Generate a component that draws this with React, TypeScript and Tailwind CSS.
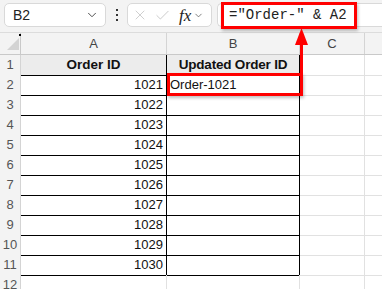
import { ChevronDown, X, Check } from 'lucide-react';

const cols = 'grid grid-cols-[21px_146px_133px_65px_1fr]';
const ids = [1021, 1022, 1023, 1024, 1025, 1026, 1027, 1028, 1029, 1030];

export default function App() {
  return (
    <div className="relative w-[382px] h-[289px] overflow-hidden bg-white font-['Liberation_Sans',Arial,sans-serif] text-[#111]">
      {/* formula bar */}
      <div className="flex items-start h-[33px] pt-[3px] bg-[#f3f3f3] border-b border-[#dcdcdc]">
        <div className="ml-[4px] w-[102px] h-[24px] flex items-center justify-between pl-[8px] pr-[6px] bg-white border border-[#d9d9d9] rounded-[5px]">
          <span className="text-[14px] text-[#222]">B2</span>
          <ChevronDown size={14} strokeWidth={1.6} className="text-[#444]" />
        </div>
        <div className="w-[21px] h-[24px] flex flex-col items-center justify-center gap-[3px]">
          <span className="w-[2px] h-[2px] bg-[#333]" />
          <span className="w-[2px] h-[2px] bg-[#333]" />
          <span className="w-[2px] h-[2px] bg-[#333]" />
        </div>
        <div className="w-[85px] h-[24px] flex items-center pl-[4px] bg-white border border-[#d9d9d9] rounded-[5px]">
          <X size={16} strokeWidth={1.1} className="text-[#bdbdbd]" />
          <Check size={17} strokeWidth={1.1} className="ml-[6px] text-[#bdbdbd]" />
          <span className="ml-[8px] font-['Liberation_Serif',serif] italic text-[17px] text-[#222] leading-none">fx</span>
          <ChevronDown size={11} strokeWidth={1.6} className="ml-[2px] text-[#555]" />
        </div>
        <div className="ml-[5px] flex-1 h-[24px] flex items-center pl-[11px] bg-white border border-r-0 border-[#d9d9d9] rounded-l-[5px]">
          <span className="font-['Liberation_Mono',monospace] text-[14px] text-[#222] whitespace-pre">="Order-" &amp; A2</span>
        </div>
      </div>

      {/* column headers */}
      <div className={`${cols} h-[22px] bg-[#f3f3f3] border-b border-[#c9c9c9] text-[13px] text-[#444]`}>
        <div className="relative border-r border-[#c9c9c9]">
          <svg className="absolute left-[7px] top-[5px]" width="12" height="12" viewBox="0 0 12 12">
            <polygon points="12,0 12,12 0,12" fill="#d3d3d3" />
          </svg>
          <span className="absolute right-[-1px] top-[1px] w-[2px] h-[2px] bg-black" />
        </div>
        <div className="flex items-center justify-center border-r border-[#d4d4d4]">A</div>
        <div className="flex items-center justify-center border-r border-[#d4d4d4]">B</div>
        <div className="flex items-center justify-center border-r border-[#d4d4d4]">C</div>
        <div />
      </div>

      {/* row 1 */}
      <div className={`${cols} h-[20px] text-[13.5px]`}>
        <div className="flex items-center justify-center bg-[#f3f3f3] border-r border-b border-[#d4d4d4] text-[13px] text-[#555]">1</div>
        <div className="flex items-center justify-center bg-[#ececec] border-r border-b border-black font-bold">Order ID</div>
        <div className="flex items-center justify-center bg-[#ececec] border-r border-b border-black font-bold tracking-[-0.2px]">Updated Order ID</div>
        <div className="border-r border-b border-[#e1e1e1]" />
        <div className="border-b border-[#e1e1e1]" />
      </div>

      {ids.map((id, i) => (
        <div key={id} className={`${cols} h-[20px] text-[13px]`}>
          <div className="flex items-center justify-center bg-[#f3f3f3] border-r border-b border-[#d4d4d4] text-[13px] text-[#555]">{i + 2}</div>
          <div className="flex items-center justify-end pr-[3px] border-r border-b border-black">{id}</div>
          <div className="flex items-center pl-[3px] border-r border-b border-black">{i === 0 ? 'Order-1021' : ''}</div>
          <div className="border-r border-b border-[#e1e1e1]" />
          <div className="border-b border-[#e1e1e1]" />
        </div>
      ))}

      <div className={`${cols} h-[20px] text-[13px]`}>
        <div className="flex items-center justify-center bg-[#f3f3f3] border-r border-[#d4d4d4] text-[13px] text-[#555]">12</div>
        <div className="border-r border-[#e1e1e1]" />
        <div className="border-r border-[#e1e1e1]" />
        <div className="border-r border-[#e1e1e1]" />
        <div />
      </div>

      {/* callouts */}
      <div className="absolute left-[221px] top-[2px] w-[136px] h-[27px] border-[3px] border-[#ff0000] shadow-[1px_2px_3px_rgba(0,0,0,0.25)]" />
      <div className="absolute left-[167px] top-[73px] w-[136px] h-[23px] border-[3px] border-[#ff0000] shadow-[1px_2px_3px_rgba(0,0,0,0.25)]" />
      <svg className="absolute left-0 top-0" width="382" height="289">
        <line x1="301.5" y1="42" x2="301.5" y2="74" stroke="#ff0000" strokeWidth="3" />
        <polygon points="301.5,28 295,45 308,45" fill="#ff0000" />
      </svg>
    </div>
  );
}
